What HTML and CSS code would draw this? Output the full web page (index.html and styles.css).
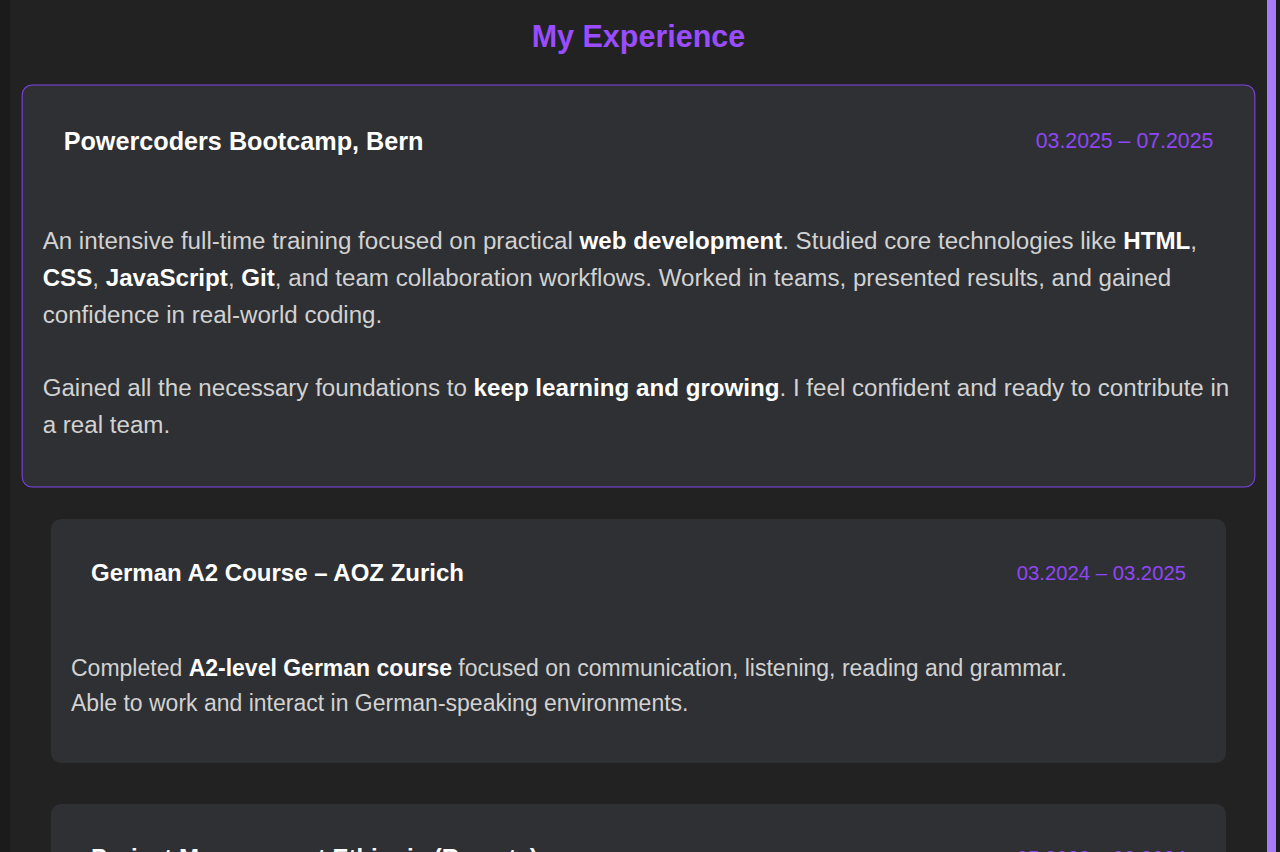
FILE: index.html
```html
<!DOCTYPE html>
<html lang="en">
<head>
<meta charset="utf-8">
<title>My Experience</title>
<link rel="stylesheet" href="styles.css">
</head>
<body>
<div class="page">
  <div class="edge"></div>
  <main class="main">
    <h2 class="section-title">My Experience</h2>
    <div class="cards">
      <article class="card active">
        <header class="card-head">
          <h3 class="card-title">Powercoders Bootcamp, Bern</h3>
          <span class="card-date">03.2025 – 07.2025</span>
        </header>
        <p class="card-text">An intensive full-time training focused on practical <strong>web development</strong>. Studied core technologies like <strong>HTML</strong>, <strong>CSS</strong>, <strong>JavaScript</strong>, <strong>Git</strong>, and team collaboration workflows. Worked in teams, presented results, and gained confidence in real-world coding.<br><br>Gained all the necessary foundations to <strong>keep learning and growing</strong>. I feel confident and ready to contribute in a real team.</p>
      </article>
      <article class="card">
        <header class="card-head">
          <h3 class="card-title">German A2 Course – AOZ Zurich</h3>
          <span class="card-date">03.2024 – 03.2025</span>
        </header>
        <p class="card-text">Completed <strong>A2-level German course</strong> focused on communication, listening, reading and grammar.<br>Able to work and interact in German-speaking environments.</p>
      </article>
      <article class="card">
        <header class="card-head">
          <h3 class="card-title">Project Management Ethiopia (Remote)</h3>
          <span class="card-date">05.2022 – 02.2024</span>
        </header>
        <p class="card-text">Coordinated projects remotely.</p>
      </article>
    </div>
  </main>
  <div class="scrollbar"><div class="thumb"></div></div>
</div>
</body>
</html>
```

FILE: styles.css
```css
html, body {
  margin: 0;
  padding: 0;
  height: 100%;
  overflow: hidden;
  background: #1b1b1b;
  font-family: "Liberation Sans", Arial, sans-serif;
}

.page {
  display: flex;
  height: 852px;
  overflow: hidden;
}

.edge {
  width: 10px;
  flex: none;
  background: #1b1b1b;
}

.main {
  flex: 1;
  background: #222222;
  overflow: hidden;
}

.scrollbar {
  width: 13px;
  flex: none;
  display: flex;
  background: #1c1c1c;
}

.thumb {
  width: 9px;
  background: #a87bfb;
}

.section-title {
  margin: 19px 0 40px;
  text-align: center;
  font-size: 30.5px;
  font-weight: 700;
  color: #9a4cff;
}

.cards {
  display: flex;
  flex-direction: column;
  gap: 41px;
  padding: 0 41px;
}

.card {
  background: #2f3033;
  border: 1px solid transparent;
  border-radius: 10px;
  padding: 19px;
}

.card.active {
  border-color: #8142e6;
  transform: scale(1.05);
}

.card-head {
  display: flex;
  justify-content: space-between;
  align-items: center;
  padding: 20px;
}

.card-title {
  margin: 0;
  font-size: 24px;
  font-weight: 700;
  color: #ffffff;
}

.card-date {
  font-size: 20.3px;
  color: #9046f7;
}

.card-text {
  margin: 44px 0 22px;
  font-size: 23px;
  line-height: 35px;
  color: #d2d2d2;
}

.card-text strong {
  color: #ffffff;
}
```
